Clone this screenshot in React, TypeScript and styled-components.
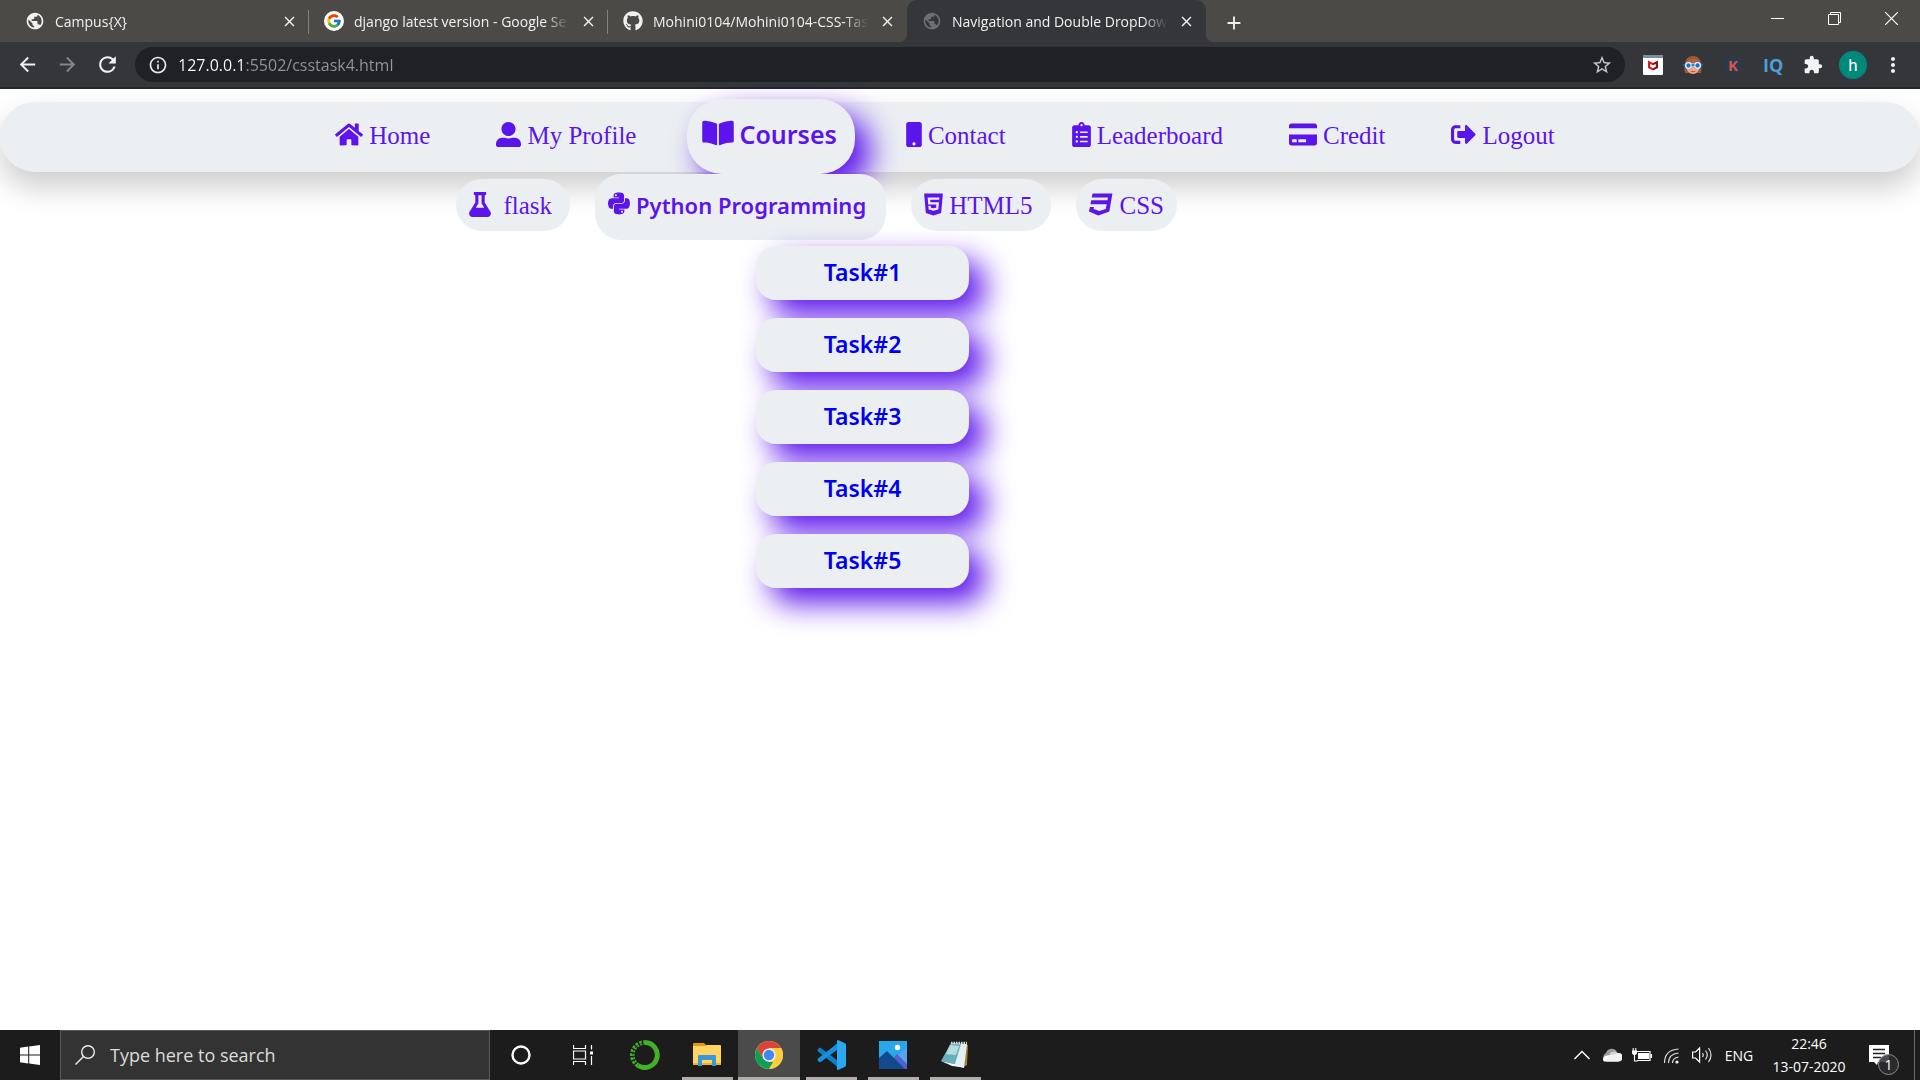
import React from "react";
import styled, { createGlobalStyle, css } from "styled-components";
import {
  FaHome, FaUserAlt, FaBookOpen, FaMobile, FaClipboardList, FaCreditCard, FaSignOutAlt,
  FaFlask, FaPython, FaHtml5, FaCss3, FaGithub,
} from "react-icons/fa";
import { FcGoogle } from "react-icons/fc";
import {
  MdArrowBack, MdArrowForward, MdRefresh, MdInfoOutline, MdStarBorder, MdExtension,
  MdMoreVert, MdClose, MdAdd, MdPublic,
} from "react-icons/md";

const violet = "#5c14ec";
const pale = "#ebeff2";
const ui = `"Open Sans", "Noto Sans", sans-serif`;
const serif = `"Liberation Serif", "Times New Roman", serif`;
const display = `"Noto Sans", "Open Sans", sans-serif`;

const GlobalStyle = createGlobalStyle`
  *, *::before, *::after { box-sizing: border-box; }
  body { margin: 0; background: #fff; }
  ul { list-style: none; margin: 0; padding: 0; }
  button { border: 0; padding: 0; background: none; color: inherit; font: inherit; }
  svg { display: block; flex: none; }
`;

const Screen = styled.div`
  display: flex;
  flex-direction: column;
  min-height: 100vh;
  font-family: ${ui};
`;

/* ---------- browser frame ---------- */

const TabStrip = styled.div`
  display: flex;
  height: 42px;
  padding-left: 10px;
  background: #4b4a47;
  color: #f1f1f1;
`;

const Tab = styled.div<{ $active?: boolean; $divided?: boolean }>`
  position: relative;
  display: flex;
  align-items: center;
  gap: 10px;
  width: 299px;
  padding: 0 11px 0 15px;
  font-size: 14px;
  border-radius: 10px 10px 0 0;
  ${(p) => p.$active && css`
    background: #35363a;
    &::before, &::after {
      content: "";
      position: absolute;
      bottom: 0;
      width: 8px;
      height: 8px;
    }
    &::before { left: -8px; background: radial-gradient(circle at 0 0, transparent 8px, #35363a 8px); }
    &::after { right: -8px; background: radial-gradient(circle at 100% 0, transparent 8px, #35363a 8px); }
  `}
  ${(p) => p.$divided && css`
    &::after {
      content: "";
      position: absolute;
      right: 0;
      top: 10px;
      width: 1px;
      height: 24px;
      background: #85847f;
    }
  `}
`;

const TabTitle = styled.span`
  flex: 1;
  min-width: 0;
  white-space: nowrap;
  mask-image: linear-gradient(90deg, #000 calc(100% - 24px), transparent);
`;

const TabButton = styled.button`
  display: grid;
  place-items: center;
  width: 18px;
  height: 18px;
`;

const NewTab = styled(TabButton)`
  align-self: center;
  width: 56px;
`;

const WindowControls = styled.div`
  display: flex;
  margin-left: auto;
`;

const WindowButton = styled.button`
  display: grid;
  place-items: center;
  width: 57px;
  height: 37px;
`;

const Toolbar = styled.div`
  display: flex;
  align-items: center;
  height: 47px;
  padding: 0 7px;
  background: #35363a;
  border-bottom: 2px solid #26272a;
  color: #e8eaed;
`;

const ToolButton = styled.button<{ $dim?: boolean }>`
  display: grid;
  place-items: center;
  width: 40px;
  height: 36px;
  color: ${(p) => (p.$dim ? "#85868a" : "#f1f3f4")};
`;

const AddressBox = styled.label`
  display: flex;
  flex: 1;
  align-items: center;
  gap: 10px;
  height: 35px;
  margin: 0 8px;
  padding: 0 12px 0 13px;
  border-radius: 18px;
  background: #202124;
`;

const AddressInput = styled.input`
  flex: 1;
  min-width: 0;
  height: 35px;
  padding: 0;
  border: 0;
  outline: 0;
  font: 16px ${ui};
  color: transparent;
  background: linear-gradient(90deg, #fff 68px, #93979b 68px);
  background-clip: text;
  -webkit-background-clip: text;
`;

const Avatar = styled.span`
  display: grid;
  place-items: center;
  width: 28px;
  height: 28px;
  border-radius: 50%;
  background: #00897b;
  color: #fff;
  font: 17px Roboto, sans-serif;
`;

const LetterBadge = styled.span<{ $fill: string; $ink: string; $size: number }>`
  display: grid;
  place-items: center;
  width: 20px;
  height: 20px;
  border-radius: 50%;
  background: ${(p) => p.$fill};
  color: ${(p) => p.$ink};
  font: 700 ${(p) => p.$size}px/20px "Open Sans", sans-serif;
`;

/* ---------- page ---------- */

const Page = styled.main`
  flex: 1;
  padding-top: 13px;
  background: #fff;
`;

const NavBar = styled.nav`
  height: 70px;
  padding: 0 30px 2px 0;
  border-radius: 35px;
  background: ${pale};
  box-shadow: 0 15px 30px rgba(0, 0, 0, 0.2);
  font: 25px/28px ${serif};
`;

const NavList = styled.ul`
  display: flex;
  align-items: center;
  justify-content: center;
  gap: 36px;
  height: 68px;
`;

const NavItem = styled.li`
  position: relative;
`;

const NavLink = styled.a<{ $open?: boolean }>`
  display: flex;
  align-items: center;
  gap: 6px;
  padding: 20px 15px;
  color: ${violet};
  text-decoration: none;
  white-space: nowrap;
  ${(p) => p.$open && css`
    height: 75px;
    gap: 5px;
    padding: 0 18px 4px 15px;
    border-radius: 35px;
    background: ${pale};
    box-shadow: 15px 15px 30px ${violet};
    font: 600 25px/28px ${display};
  `}
`;

const CourseMenu = styled.ul`
  position: absolute;
  top: 75px;
  left: -231px;
  display: flex;
  align-items: flex-start;
  gap: 25px;
  width: max-content;
`;

const CourseItem = styled.li<{ $open?: boolean }>`
  position: relative;
  padding-top: ${(p) => (p.$open ? 0 : 5)}px;
`;

const CourseLink = styled.a<{ $open?: boolean; $wide?: boolean; $end?: number }>`
  display: flex;
  align-items: center;
  gap: ${(p) => (p.$wide ? 12 : 6)}px;
  height: 52px;
  padding: 2px ${(p) => p.$end ?? 18}px 0 13px;
  border-radius: 26px;
  background: ${pale};
  color: ${violet};
  text-decoration: none;
  white-space: nowrap;
  ${(p) => p.$open && css`
    height: 66px;
    padding-top: 0;
    padding-bottom: 4px;
    font: 600 22px/28px ${display};
  `}
`;

const TaskMenu = styled.ul`
  position: absolute;
  top: 72px;
  left: 161px;
  display: grid;
  gap: 18px;
  width: 213px;
`;

const TaskLink = styled.a`
  display: block;
  height: 54px;
  border-radius: 20px;
  background: ${pale};
  box-shadow: 15px 15px 30px ${violet};
  color: #0000ee;
  font: 600 23px/52px ${display};
  text-align: center;
  text-decoration: none;
`;

const IconSlot = styled.span<{ $w: number; $h?: number }>`
  display: grid;
  place-items: center;
  width: ${(p) => p.$w}px;
  height: ${(p) => p.$h ?? 25}px;
  margin-bottom: 3px;
  svg { width: ${(p) => p.$w}px; height: ${(p) => p.$h ?? 25}px; }
`;

/* ---------- taskbar ---------- */

const TaskBar = styled.footer`
  display: flex;
  height: 50px;
  background: #1c1c1c;
  color: #fff;
`;

const StartButton = styled.button`
  display: grid;
  place-items: center;
  width: 60px;
`;

const SearchBox = styled.label`
  display: flex;
  align-items: center;
  gap: 15px;
  width: 430px;
  padding: 0 14px;
  border: 1px solid #5a5a5a;
  background: #333;
`;

const SearchInput = styled.input`
  flex: 1;
  min-width: 0;
  padding: 0;
  border: 0;
  outline: 0;
  background: none;
  font: 18px ${ui};
  &::placeholder { color: #dcdcdc; opacity: 1; }
`;

const AppButton = styled.button<{ $running?: boolean; $current?: boolean }>`
  display: grid;
  place-items: center;
  width: 62px;
  background: ${(p) => (p.$current ? "#4b4b4b" : "transparent")};
  ${(p) => (p.$running || p.$current) && css`
    background-image: linear-gradient(#b3aeae, #b3aeae);
    background-repeat: no-repeat;
    background-position: bottom;
    background-size: ${p.$current ? "100%" : "51px"} 3px;
  `}
`;

const Tray = styled.div`
  display: flex;
  align-items: center;
  margin-left: auto;
  padding-right: 5px;
  font-size: 14px;
  line-height: 23px;
`;

const TrayButton = styled.button`
  display: grid;
  place-items: center;
  width: 30px;
  height: 50px;
`;

const Language = styled.button`
  width: 44px;
`;

const Clock = styled.time`
  width: 96px;
  text-align: center;
`;

const Notices = styled.button`
  position: relative;
  width: 58px;
  height: 50px;
  padding-left: 12px;
  border-right: 1px solid #6a6a6a;
`;

const NoticeCount = styled.span`
  position: absolute;
  left: 21px;
  top: 24px;
  width: 21px;
  height: 21px;
  border: 1px solid #8a8a8a;
  border-radius: 50%;
  background: rgba(45, 45, 45, 0.85);
  font-size: 14px;
  line-height: 19px;
  text-align: center;
`;

const SvgIcon = ({ w, h = w, box, children }: { w: number; h?: number; box: string; children: React.ReactNode }) => (
  <svg width={w} height={h} viewBox={box} fill="none" aria-hidden="true">{children}</svg>
);

type Entry = { label: string; width: number; icon: React.ReactNode };

const navBefore: Entry[] = [
  { label: "Home", width: 28, icon: <FaHome /> },
  { label: "My Profile", width: 25, icon: <FaUserAlt /> },
];

const navAfter: Entry[] = [
  { label: "Contact", width: 16, icon: <FaMobile /> },
  { label: "Leaderboard", width: 19, icon: <FaClipboardList /> },
  { label: "Credit", width: 28, icon: <FaCreditCard /> },
  { label: "Logout", width: 25, icon: <FaSignOutAlt /> },
];

const NavEntry = ({ label, width, icon }: Entry) => (
  <NavItem>
    <NavLink href="#"><IconSlot $w={width}>{icon}</IconSlot>{label}</NavLink>
  </NavItem>
);

const BrowserTab = ({ title, icon, active, divided }: { title: string; icon: React.ReactNode; active?: boolean; divided?: boolean }) => (
  <Tab $active={active} $divided={divided}>
    {icon}
    <TabTitle>{title}</TabTitle>
    <TabButton aria-label="Close tab"><MdClose size={17} /></TabButton>
  </Tab>
);

const Extensions = () => (
  <>
    <ToolButton aria-label="McAfee">
      <SvgIcon w={20} box="0 0 20 20">
        <rect width="20" height="20" rx="1" fill="#fff" /><path d="M0 0h20v3H0z" fill="#78909c" />
        <path d="M5 5.500l5 2.500v7.500l-5-2.500z" fill="#d01c28" /><path d="M10 8l5-2.500V13l-5 2.500z" fill="#8f0f18" />
        <path d="M7.200 9l2.800 1.300L12.800 9v2.800L10 13.200l-2.800-1.400z" fill="#fff" />
      </SvgIcon>
    </ToolButton>
    <ToolButton aria-label="Goggles">
      <SvgIcon w={20} box="0 0 20 20">
        <path d="M2 18C0 8 3 1 10 1s10 7 8 17z" fill="#9a5a32" />
        <ellipse cx="10" cy="12" rx="6.500" ry="7" fill="#f0a58a" /><path d="M3 8c1-5 12-6 14 0z" fill="#a8643a" />
        <path d="M7 16c2 1.500 4 1.500 6 0z" fill="#d8402f" />
        <circle cx="5.500" cy="10.500" r="3.500" fill="#1a73c9" /><circle cx="14.500" cy="10.500" r="3.500" fill="#1a73c9" />
        <circle cx="5.500" cy="10.500" r="2.800" fill="#1a73c9" stroke="#e8f3ff" strokeWidth="1.300" />
        <circle cx="14.500" cy="10.500" r="2.800" fill="#1a73c9" stroke="#e8f3ff" strokeWidth="1.300" />
        <path d="M0 10h2M8.500 10h3M18 10h2" stroke="#1a73c9" strokeWidth="1.500" />
      </SvgIcon>
    </ToolButton>
    <ToolButton aria-label="K"><LetterBadge $fill="#2b3a4a" $ink="#d9534f" $size={15}>K</LetterBadge></ToolButton>
    <ToolButton aria-label="IQ"><LetterBadge $fill="transparent" $ink="#4d9fdb" $size={18}>IQ</LetterBadge></ToolButton>
    <ToolButton aria-label="Extensions"><MdExtension size={20} /></ToolButton>
    <ToolButton aria-label="Profile"><Avatar>h</Avatar></ToolButton>
    <ToolButton aria-label="Menu"><MdMoreVert size={24} /></ToolButton>
  </>
);

const AnacondaIcon = () => (
  <SvgIcon w={30} box="0 0 30 30">
    <path d="M15 2.500a12.500 12.500 0 1 1-7 23" stroke="#43b02a" strokeWidth="5" />
    <path d="M8 25.500A12.500 12.500 0 0 1 15 2.500" stroke="#43b02a" strokeWidth="4.500" strokeDasharray="2.500 1.300" />
    <path d="M7 24A12 12 0 0 1 13 3" stroke="#1c1c1c" strokeWidth="1" strokeDasharray="1.500 2" />
  </SvgIcon>
);

const ExplorerIcon = () => (
  <SvgIcon w={28} h={24} box="0 0 28 24">
    <path d="M0 1q0-1 1-1h10l3 3H0z" fill="#e09b0b" />
    <path d="M0 3h12l2-1h13q1 0 1 1v18q0 1-1 1H1q-1 0-1-1z" fill="#ffd55f" /><path d="M0 20h28v1q0 1-1 1H1q-1 0-1-1z" fill="#eeb32a" />
    <path d="M5 23V13q0-1 1-1h16q1 0 1 1v10h-4v-6h-10v6z" fill="#3b97dd" />
  </SvgIcon>
);

const ChromeIcon = () => (
  <SvgIcon w={28} box="0 0 28 28">
    <circle cx="14" cy="14" r="14" fill="#ffcd40" />
    <path d="M14 14L8 17.500 1.900 7A14 14 0 0 1 26.100 7H14z" fill="#db4437" />
    <path d="M14 28A14 14 0 0 1 1.900 7L8 17.500l6 3.500h5z" fill="#0f9d58" />
    <path d="M26.100 7A14 14 0 0 1 14 28l6.100-10.500L20 10l-6-3z" fill="#ffcd40" />
    <circle cx="14" cy="14" r="6.600" fill="#f1f1f1" /><circle cx="14" cy="14" r="5.200" fill="#4285f4" />
  </SvgIcon>
);

const CodeIcon = () => (
  <SvgIcon w={30} box="0 0 30 30">
    <path d="M2 9l2-1.500 19 14V28L2 11.500q-1-1 0-2.500z" fill="#0f7fc9" />
    <path d="M2 21l2 1.500 19-14V2L2 18.500q-1 1 0 2.500z" fill="#1690dc" />
    <path d="M22 0l7 3.300q1 .5 1 1.700v20q0 1.200-1 1.700L22 30q-1 0-1-1V1q0-1 1-1z" fill="#2aa8f2" />
  </SvgIcon>
);

const PhotosIcon = () => (
  <SvgIcon w={28} box="0 0 28 28">
    <rect width="28" height="28" fill="#28a8ea" /><path d="M16 16l12-9v21H16z" fill="#5aa2ec" />
    <path d="M12 20l6-7 10 10v5H12z" fill="#4e63cf" /><path d="M0 17l8-7 18 18H0z" fill="#134a8f" />
    <circle cx="18.500" cy="6.500" r="2.700" fill="#fff" />
  </SvgIcon>
);

const NotepadIcon = () => (
  <SvgIcon w={28} box="0 0 28 28">
    <path d="M24 3l3 1-1 20-5 3z" fill="#a97a35" /><path d="M10 2l16 1-3 24-9-2z" fill="#e4eff0" />
    <path d="M10 2l10 1-6 20-14-3z" fill="#69b0bd" /><path d="M9 4l9 1-3 9-10-1z" fill="#b6dce2" />
    <path d="M0 20l14 3 7 3-10-1z" fill="#eef6f7" /><path d="M10 2h16" stroke="#ddd" strokeWidth="2.500" strokeDasharray="1.500 1" />
  </SvgIcon>
);

const tasks = ["Task#1", "Task#2", "Task#3", "Task#4", "Task#5"];

export default function App() {
  return (
    <Screen>
      <GlobalStyle />
      <header>
        <TabStrip>
          <BrowserTab title="Campus{X}" icon={<MdPublic size={20} />} divided />
          <BrowserTab
            title="django latest version - Google Se"
            icon={
              <SvgIcon w={20} box="0 0 20 20">
                <circle cx="10" cy="10" r="10" fill="#fff" />
                <FcGoogle x={2} y={2} width={16} height={16} size={16} />
              </SvgIcon>
            }
            divided
          />
          <BrowserTab title="Mohini0104/Mohini0104-CSS-Tas" icon={<FaGithub size={20} />} />
          <BrowserTab title="Navigation and Double DropDow" icon={<MdPublic size={20} color="#6c6f73" />} active />
          <NewTab aria-label="New tab"><MdAdd size={22} /></NewTab>
          <WindowControls>
            <WindowButton aria-label="Minimize"><SvgIcon w={13} box="0 0 13 13"><path d="M0 6.500h13" stroke="#fff" /></SvgIcon></WindowButton>
            <WindowButton aria-label="Restore">
              <SvgIcon w={13} box="0 0 13 13"><path d="M.5 2.500h10v10H.5zM2.500 2.500v-2h10v10h-2" stroke="#fff" /></SvgIcon>
            </WindowButton>
            <WindowButton aria-label="Close"><SvgIcon w={13} box="0 0 13 13"><path d="M0 0l13 13M13 0L0 13" stroke="#fff" strokeWidth="1.200" /></SvgIcon></WindowButton>
          </WindowControls>
        </TabStrip>
        <Toolbar>
          <ToolButton aria-label="Back"><MdArrowBack size={23} /></ToolButton>
          <ToolButton aria-label="Forward" $dim><MdArrowForward size={23} /></ToolButton>
          <ToolButton aria-label="Reload"><MdRefresh size={25} /></ToolButton>
          <AddressBox>
            <MdInfoOutline size={20} />
            <AddressInput aria-label="Address" defaultValue="127.0.0.1:5502/csstask4.html" />
            <MdStarBorder size={22} color="#c4c6c9" />
          </AddressBox>
          <Extensions />
        </Toolbar>
      </header>

      <Page>
        <NavBar>
          <NavList>
            {navBefore.map((n) => <NavEntry key={n.label} {...n} />)}
            <NavItem>
              <NavLink href="#" $open><IconSlot $w={32} $h={28}><FaBookOpen /></IconSlot>Courses</NavLink>
              <CourseMenu>
                <CourseItem>
                  <CourseLink href="#" $wide><IconSlot $w={22}><FaFlask /></IconSlot>flask</CourseLink>
                </CourseItem>
                <CourseItem $open>
                  <CourseLink href="#" $open $end={20}><IconSlot $w={22}><FaPython /></IconSlot>Python Programming</CourseLink>
                  <TaskMenu>
                    {tasks.map((t) => <li key={t}><TaskLink href="#">{t}</TaskLink></li>)}
                  </TaskMenu>
                </CourseItem>
                <CourseItem>
                  <CourseLink href="#"><IconSlot $w={19}><FaHtml5 /></IconSlot>HTML5</CourseLink>
                </CourseItem>
                <CourseItem>
                  <CourseLink href="#" $end={13}><IconSlot $w={25}><FaCss3 /></IconSlot>CSS</CourseLink>
                </CourseItem>
              </CourseMenu>
            </NavItem>
            {navAfter.map((n) => <NavEntry key={n.label} {...n} />)}
          </NavList>
        </NavBar>
      </Page>

      <TaskBar>
        <StartButton aria-label="Start">
          <SvgIcon w={20} box="0 0 20 20"><path d="M0 2.800l8.200-1.200v7.900H0zM9.200 1.400L20 0v9.500H9.200zM0 10.500h8.200v7.900L0 17.200zM9.200 10.500H20V20L9.200 18.600z" fill="#fff" /></SvgIcon>
        </StartButton>
        <SearchBox>
          <SvgIcon w={20} box="0 0 20 20"><circle cx="13" cy="7" r="6.300" stroke="#eee" strokeWidth="1.400" /><path d="M8.500 11.500L.5 19.500" stroke="#eee" strokeWidth="1.400" /></SvgIcon>
          <SearchInput aria-label="Search" placeholder="Type here to search" />
        </SearchBox>
        <AppButton aria-label="Cortana"><SvgIcon w={20} box="0 0 20 20"><circle cx="10" cy="10" r="8.500" stroke="#fff" strokeWidth="2.400" /></SvgIcon></AppButton>
        <AppButton aria-label="Task view">
          <SvgIcon w={20} box="0 0 20 20"><path d="M.5 0v3.500h12V0M.5 6h12v8H.5zM.5 20v-3.500h12V20M18.500 0v4.500M18.500 11v9" stroke="#fff" strokeWidth="1.200" /><path d="M17 6.500h3v3h-3z" fill="#fff" /></SvgIcon>
        </AppButton>
        <AppButton aria-label="Anaconda"><AnacondaIcon /></AppButton>
        <AppButton aria-label="File Explorer" $running><ExplorerIcon /></AppButton>
        <AppButton aria-label="Chrome" $current><ChromeIcon /></AppButton>
        <AppButton aria-label="Visual Studio Code" $running><CodeIcon /></AppButton>
        <AppButton aria-label="Photos" $running><PhotosIcon /></AppButton>
        <AppButton aria-label="Notepad" $running><NotepadIcon /></AppButton>
        <Tray>
          <TrayButton aria-label="Hidden icons"><SvgIcon w={16} h={10} box="0 0 16 10"><path d="M.5 9L8 1.500 15.500 9" stroke="#fff" strokeWidth="1.400" /></SvgIcon></TrayButton>
          <TrayButton aria-label="OneDrive">
            <SvgIcon w={20} h={14} box="0 0 20 14"><path d="M3 12a4 4 0 0 1 1-7 6 6 0 0 1 11-1l-7 6z" fill="#9b9b9b" /><path d="M8 5a6 6 0 0 1 8 0 4 4 0 0 1 1 8l-9-4z" fill="#d4d4d4" /><path d="M2 13.500a3.500 3.500 0 0 1 1-5.500l5-1 9 6.500z" fill="#fff" /><path d="M7 8l9-3a4 4 0 0 1 1 8.500H4z" fill="#f2f2f2" /></SvgIcon>
          </TrayButton>
          <TrayButton aria-label="Battery">
            <SvgIcon w={20} h={14} box="0 0 20 14"><path d="M5 3.500h13v9H5" stroke="#fff" strokeWidth="1.200" /><path d="M6 5h11v6H6zM18.500 6H20v4h-1.500zM0 2.500h5v3q-1 1.500-2.500 1.500T0 5.500z" fill="#fff" /><path d="M1.200 0v3M3.800 0v3M2.500 6v7h3" stroke="#fff" strokeWidth="1.100" /></SvgIcon>
          </TrayButton>
          <TrayButton aria-label="Network">
            <SvgIcon w={18} box="0 0 18 18"><circle cx="14" cy="16" r="1.600" fill="#fff" /><path d="M9.500 17q0-5 6-6M5.500 17q0-9 10-10M1.500 17q0-13 14-14" stroke="#ddd" strokeWidth="1.200" /></SvgIcon>
          </TrayButton>
          <TrayButton aria-label="Volume">
            <SvgIcon w={20} h={18} box="0 0 20 18"><path d="M.6 6h3l4-4v14l-4-4h-3z" stroke="#fff" strokeWidth="1.200" /><path d="M10.500 7q1.500 2 0 4M13.500 4.500q3.500 4.500 0 9M16.500 2q5 7 0 14" stroke="#ddd" strokeWidth="1.200" /></SvgIcon>
          </TrayButton>
          <Language>ENG</Language>
          <Clock>22:46<br />13-07-2020</Clock>
          <Notices aria-label="Notifications">
            <SvgIcon w={20} box="0 0 20 20"><path d="M0 0h20v17H9l-1 3-3-3H0z" fill="#fff" /><path d="M4 4.500h12M4 8.500h12M4 12.500h8" stroke="#222" strokeWidth="1.300" /></SvgIcon>
            <NoticeCount>1</NoticeCount>
          </Notices>
        </Tray>
      </TaskBar>
    </Screen>
  );
}
